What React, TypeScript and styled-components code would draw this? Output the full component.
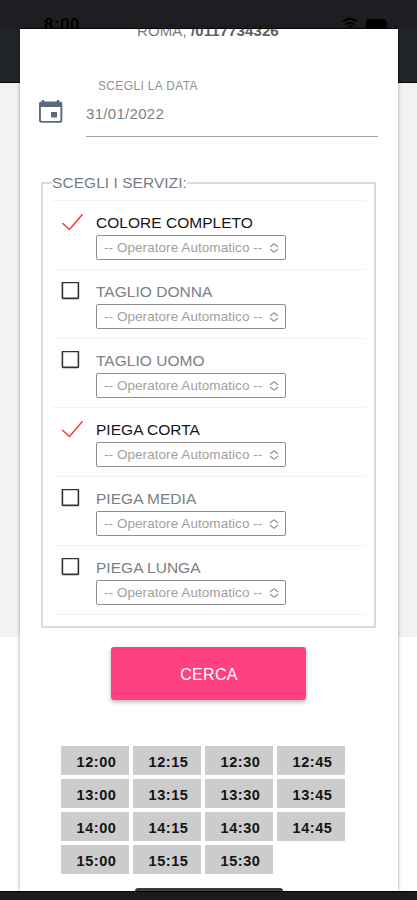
import React from "react";
import styled, { createGlobalStyle } from "styled-components";

const GlobalStyle = createGlobalStyle`
  * { box-sizing: border-box; }
  body { margin: 0; background: #fff; font-family: "Liberation Sans", Arial, sans-serif; }
`;

const Screen = styled.div`
  width: 417px;
  height: 900px;
  display: flex;
  flex-direction: column;
  overflow: hidden;
`;

const StatusBar = styled.header`
  flex: none;
  height: 29px;
  padding: 15px 29px 0 44px;
  display: flex;
  align-items: flex-start;
  justify-content: space-between;
  overflow: hidden;
  background: #1d1e21;
  color: #000;
`;

const Clock = styled.span`
  font-size: 17px;
  line-height: 19px;
  font-weight: 700;
  letter-spacing: 0.4px;
`;

const StatusIcons = styled.div`
  display: flex;
  gap: 8px;
  padding-top: 2px;
`;

const Page = styled.main`
  flex: 1;
  min-height: 0;
  padding: 0 19px 0 20px;
  background: linear-gradient(
    #212428 0 53px,
    #08090a 53px 54px,
    #f0f2f4 54px 608px,
    #fff 608px
  );
`;

const Card = styled.section`
  height: 862px;
  background: #fff;
  box-shadow: 0 0 4px rgba(0, 0, 0, 0.36), 0 -1px 0 #050505;
  display: flex;
  flex-direction: column;
  overflow: hidden;
`;

const Contact = styled.div`
  height: 50px;
  margin-top: -7px;
  padding-left: 117px;
  font-size: 15px;
  line-height: 18px;
  letter-spacing: 0.1px;
  color: #777b80;
  white-space: nowrap;

  b { color: #5b6066; }
`;

const DateField = styled.div`
  display: flex;
  height: 65px;
  padding: 0 20px 0 18px;
  gap: 23px;

  > svg { flex: none; margin-top: 27px; }
`;

const DateInput = styled.div`
  flex: 1;
  border-bottom: 1px solid #a5a5a5;
`;

const DateLabel = styled.div`
  padding: 7px 0 0 12px;
  font-size: 12px;
  line-height: 14px;
  letter-spacing: 0.35px;
  color: #929292;
`;

const DateValue = styled.div`
  padding-top: 12px;
  font-size: 15px;
  line-height: 18px;
  letter-spacing: 0.3px;
  color: #7c7f82;
`;

const Services = styled.fieldset`
  height: 454px;
  margin: 37px 22px 0 21px;
  padding: 8px 9px 0;
  border: 2px solid #dadada;
  min-width: 0;
`;

const Legend = styled.legend`
  height: 18px;
  padding: 0;
  font-size: 15.5px;
  line-height: 18px;
  letter-spacing: 0.05px;
  color: #777d83;
`;

const ServiceRow = styled.div`
  height: 69px;
  display: flex;
  border-top: 1px solid #f3f3f3;

  &:last-child { height: 70px; border-bottom: 1px solid #f3f3f3; }
`;

const Mark = styled.div`
  width: 44px;
  padding: 12px 0 0 9px;

  svg { display: block; }
`;

const Option = styled.div``;

const ServiceName = styled.div<{ $on: boolean }>`
  height: 34px;
  padding-top: 13px;
  font-size: 15.5px;
  line-height: 18px;
  white-space: nowrap;
  letter-spacing: 0.03px;
  color: ${(p) => (p.$on ? "#161616" : "#7a8086")};
`;

const Operator = styled.div`
  width: 190px;
  height: 25px;
  padding: 0 6px 0 7px;
  display: flex;
  align-items: center;
  justify-content: space-between;
  border: 1px solid #8c8c8c;
  border-radius: 2px;
  font-size: 13.5px;
  letter-spacing: 0.06px;
  color: #a0a0a0;
  white-space: nowrap;
`;

const SearchButton = styled.button`
  flex: none;
  width: 195px;
  height: 53px;
  margin: 19px 0 0 91px;
  border: 0;
  border-radius: 3px;
  background: #ff4081;
  box-shadow: 0 2px 4px rgba(0, 0, 0, 0.3);
  color: #fff;
  font: 16px "Liberation Sans", Arial, sans-serif;
  letter-spacing: 0.3px;
  padding: 3px 0 0 1px;
`;

const Slots = styled.div`
  display: grid;
  grid-template-columns: repeat(4, 68px);
  grid-auto-rows: 29px;
  gap: 4px;
  margin: 46px 0 0 41px;
`;

const Slot = styled.div`
  display: flex;
  align-items: center;
  justify-content: center;
  padding: 2px 0 0 3px;
  background: #ccc;
  color: #141414;
  font-size: 14.5px;
  font-weight: 700;
  letter-spacing: 0.55px;
`;

const HomeIndicator = styled.div`
  flex: none;
  width: 148px;
  height: 3px;
  margin: auto 0 0 115px;
  border-radius: 3px 3px 0 0;
  background: #3c3d3f;
`;

const BottomBar = styled.footer`
  flex: none;
  height: 9px;
  background: #1b1b1e;
  border-top: 1px solid #030303;
`;

const CheckIcon = () => (
  <svg width="24" height="20" viewBox="0 0 24 20" fill="none">
    <path d="M1.2 10L8.5 16.5L21.5 1.3" stroke="#f43a32" strokeWidth="1.5" />
  </svg>
);

const BoxIcon = () => (
  <svg width="24" height="20" viewBox="0 0 24 20" fill="none">
    <rect x="1.4" y="0.4" width="16" height="16" rx="0.6" stroke="#333" strokeWidth="1.6" overflow="visible" />
  </svg>
);

const ArrowsIcon = () => (
  <svg width="10" height="12" viewBox="0 0 10 12" fill="none" stroke="#999" strokeWidth="1.3">
    <path d="M1 5L4 2.4Q5 1.6 6 2.4L9 5M1 7L4 9.6Q5 10.4 6 9.6L9 7" />
  </svg>
);

const CalendarIcon = () => (
  <svg width="25" height="25" viewBox="0 0 25 25">
    <path
      fillRule="evenodd"
      fill="#5b6b7d"
      d="M4 1h2.2v1.5h12.6V1H21v1.5h1a2.3 2.3 0 0 1 2.3 2.3v16.4A2.3 2.3 0 0 1 22 23.7H3.3a2.3 2.3 0 0 1-2.3-2.3V4.8A2.3 2.3 0 0 1 3.3 2.5H4zM2.9 8v13a.9.9 0 0 0 .9.9h17.700a.9.9 0 0 0 .9-.9V8z"
    />
    <rect x="13" y="13" width="6" height="5.5" fill="#5b6b7d" />
  </svg>
);

const WifiIcon = () => (
  <svg width="16" height="13" viewBox="0 0 16 13" fill="none" stroke="#000" strokeWidth="2">
    <path d="M1 4.5Q8-1 15 4.5M3.5 7.5Q8 4 12.5 7.5M6 10Q8 8.6 10 10" />
  </svg>
);

const BatteryIcon = () => (
  <svg width="22" height="12" viewBox="0 0 22 12">
    <rect x="0" y="2" width="20" height="10" rx="2" />
    <rect x="20.5" y="5" width="1.5" height="4" rx=".7" />
  </svg>
);

const services = [
  { name: "COLORE COMPLETO", on: true },
  { name: "TAGLIO DONNA", on: false },
  { name: "TAGLIO UOMO", on: false },
  { name: "PIEGA CORTA", on: true },
  { name: "PIEGA MEDIA", on: false },
  { name: "PIEGA LUNGA", on: false },
];

const times = [
  "12:00", "12:15", "12:30", "12:45",
  "13:00", "13:15", "13:30", "13:45",
  "14:00", "14:15", "14:30", "14:45",
  "15:00", "15:15", "15:30",
];

export default function App() {
  return (
    <>
      <GlobalStyle />
      <Screen>
        <StatusBar>
          <Clock>8:00</Clock>
          <StatusIcons>
            <WifiIcon />
            <BatteryIcon />
          </StatusIcons>
        </StatusBar>
        <Page>
          <Card>
            <Contact>
              ROMA, <b>/0117734326</b>
            </Contact>
            <DateField>
              <CalendarIcon />
              <DateInput>
                <DateLabel>SCEGLI LA DATA</DateLabel>
                <DateValue>31/01/2022</DateValue>
              </DateInput>
            </DateField>
            <Services>
              <Legend>SCEGLI I SERVIZI:</Legend>
              {services.map((s) => (
                <ServiceRow key={s.name}>
                  <Mark>{s.on ? <CheckIcon /> : <BoxIcon />}</Mark>
                  <Option>
                    <ServiceName $on={s.on}>{s.name}</ServiceName>
                    <Operator>
                      -- Operatore Automatico --
                      <ArrowsIcon />
                    </Operator>
                  </Option>
                </ServiceRow>
              ))}
            </Services>
            <SearchButton>CERCA</SearchButton>
            <Slots>
              {times.map((t) => (
                <Slot key={t}>{t}</Slot>
              ))}
            </Slots>
            <HomeIndicator />
          </Card>
        </Page>
        <BottomBar />
      </Screen>
    </>
  );
}
